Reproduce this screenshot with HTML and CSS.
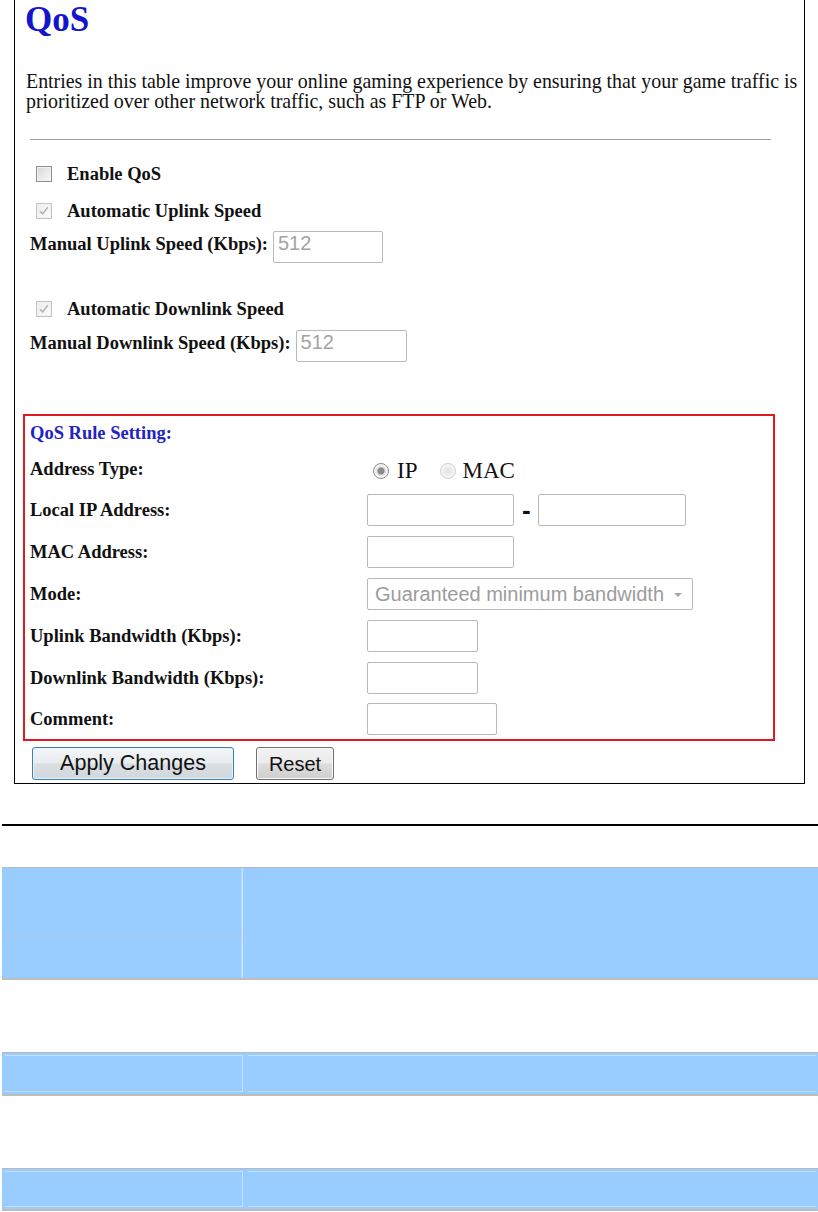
FILE: index.html
```html
<!DOCTYPE html>
<html lang="en">
<head>
<meta charset="utf-8">
<title>QoS</title>
<link rel="stylesheet" href="styles.css">
</head>
<body>
<div class="panel">
  <h1 class="title">QoS</h1>
  <p class="intro">Entries in this table improve your online gaming experience by ensuring that your game traffic is<br>prioritized over other network traffic, such as FTP or Web.</p>
  <div class="rule"></div>

  <div class="check-row r-enable"><span class="cb"></span><span class="lbl">Enable QoS</span></div>
  <div class="check-row r-auto-up"><span class="cb checked"><svg viewBox="0 0 16 16" width="16" height="16"><path d="M4 8.2 L6.6 11 L11.8 4.2" fill="none" stroke="#b0b0b0" stroke-width="1.4"/></svg></span><span class="lbl">Automatic Uplink Speed</span></div>
  <div class="field-row r-man-up"><span class="lbl">Manual Uplink Speed (Kbps):</span><input class="txt w110" value="512" disabled></div>
  <div class="check-row r-auto-down"><span class="cb checked"><svg viewBox="0 0 16 16" width="16" height="16"><path d="M4 8.2 L6.6 11 L11.8 4.2" fill="none" stroke="#b0b0b0" stroke-width="1.4"/></svg></span><span class="lbl">Automatic Downlink Speed</span></div>
  <div class="field-row r-man-down"><span class="lbl">Manual Downlink Speed (Kbps):</span><input class="txt w111" value="512" disabled></div>

  <div class="rulebox">
    <div class="rb-title">QoS Rule Setting:</div>
    <div class="rb-spacer"></div>

    <div class="lbl">Address Type:</div>
    <div class="radios">
      <span class="radio on"></span><span class="rlabel">IP</span>
      <span class="radio off"></span><span class="rlabel mac">MAC</span>
    </div>

    <div class="lbl">Local IP Address:</div>
    <div class="fields"><input class="txt w147"><span class="dash">-</span><input class="txt w148"></div>

    <div class="lbl">MAC Address:</div>
    <div class="fields"><input class="txt w147"></div>

    <div class="lbl">Mode:</div>
    <div class="fields">
      <div class="select">
        <span class="select-text">Guaranteed minimum bandwidth</span>
        <svg class="select-arrow" viewBox="0 0 10 6" width="10" height="6"><path d="M1 1 L5 5 L9 1 Z" fill="#a8a8a8"/></svg>
      </div>
    </div>

    <div class="lbl">Uplink Bandwidth (Kbps):</div>
    <div class="fields"><input class="txt w111"></div>

    <div class="lbl">Downlink Bandwidth (Kbps):</div>
    <div class="fields"><input class="txt w111"></div>

    <div class="lbl">Comment:</div>
    <div class="fields"><input class="txt w130"></div>
  </div>

  <div class="actions">
    <button class="btn btn-apply" type="button">Apply Changes</button>
    <button class="btn btn-reset" type="button">Reset</button>
  </div>
</div>

<div class="divider"></div>

<div class="band band1">
  <div class="cell c-top"></div>
  <div class="cell c-right"></div>
  <div class="cell c-bottom"></div>
</div>

<div class="band band2">
  <div class="cell c-left"></div>
  <div class="cell c-main"></div>
</div>

<div class="band band3">
  <div class="cell c-left"></div>
  <div class="cell c-main"></div>
</div>
</body>
</html>
```

FILE: styles.css
```css
* { box-sizing: border-box; }

body {
  margin: 0;
  background: #fff;
  color: #111;
  font-family: "Liberation Serif", "Times New Roman", serif;
}

.panel {
  margin-left: 14px;
  width: 791px;
  border: 1px solid #000;
  border-top: 0;
  padding: 0 0 3px 0;
}

.title {
  margin: 0 0 0 10px;
  height: 40px;
  font: bold 35px/40px "Liberation Serif", serif;
  color: #1414cc;
}

.intro {
  margin: 31px 0 0 11px;
  font-size: 19.9px;
  line-height: 20px;
  white-space: nowrap;
}

.rule {
  margin: 28px 0 0 15px;
  width: 741px;
  height: 0;
  border-top: 1px solid #a0a0a0;
}

.lbl {
  font-weight: bold;
  font-size: 18.5px;
}

.check-row {
  display: flex;
  align-items: center;
  height: 30px;
  margin-left: 21px;
}

.r-enable { margin-top: 19px; }
.r-auto-up { margin-top: 7px; }
.r-auto-down { margin-top: 31px; }

.cb {
  display: inline-block;
  width: 16px;
  height: 16px;
  margin-right: 15px;
  border: 1px solid #8e8f8f;
  background: linear-gradient(135deg, #d6d6d6, #fbfbfb);
  box-shadow: inset 0 0 0 1px #f2f2f2;
  position: relative;
}

.cb.checked {
  border-color: #c4c4c4;
  background: linear-gradient(135deg, #ececec, #fdfdfd);
}

.cb svg {
  position: absolute;
  left: -1px;
  top: -1px;
}

.field-row {
  display: flex;
  align-items: baseline;
  gap: 5px;
  margin-left: 15px;
}

.r-man-up { margin-top: 5px; }
.r-man-down { margin-top: 6px; }

.txt {
  height: 32px;
  border: 1px solid #b8b8b8;
  border-radius: 2px;
  padding: 0 4px 7px;
  font: 20px/23px "Liberation Sans", Arial, sans-serif;
  color: #a0a0a0;
  background: #fff;
}

.txt:disabled {
  background: #fff;
  color: #a4a4a4;
}

.w110 { width: 110px; }
.w111 { width: 111px; }
.w130 { width: 130px; }
.w147 { width: 147px; }
.w148 { width: 148px; }

.rulebox {
  margin: 52px 0 0 8px;
  width: 752px;
  border: 2px solid #dd1a22;
  padding-left: 5px;
  display: grid;
  grid-template-columns: 337px 1fr;
  grid-template-rows: 34px 39px repeat(5, 42px) 40px;
  align-items: center;
}

.rb-title {
  font-weight: bold;
  font-size: 18.5px;
  color: #2323c4;
}

.radios {
  display: flex;
  align-items: center;
  padding-top: 2px;
}

.radio {
  display: inline-block;
  width: 16px;
  height: 16px;
  border-radius: 50%;
}

.radio.on {
  margin-left: 6px;
  border: 1px solid #8c8c8c;
  background: radial-gradient(circle, #8a8a8a 0, #8a8a8a 3px, #dcdcdc 4px, #f6f6f6 6px);
}

.radio.off {
  margin-left: 23px;
  border: 1px solid #cfcfcf;
  background: radial-gradient(circle, #e2e2e2 0, #ececec 4px, #f7f7f7 7px);
}

.rlabel {
  font-size: 23px;
  margin-left: 8px;
}

.rlabel.mac { margin-left: 6px; }

.fields {
  display: flex;
  align-items: center;
}

.fields .txt { padding-bottom: 0; }

.dash {
  font: bold 26px/32px "Liberation Sans", Arial, sans-serif;
  margin: 0 7px 0 8px;
  color: #111;
}

.select {
  position: relative;
  width: 326px;
  height: 32px;
  border: 1px solid #b8b8b8;
  border-radius: 2px;
  display: flex;
  align-items: center;
  padding-left: 7px;
}

.select-text {
  font: 20px/23px "Liberation Sans", Arial, sans-serif;
  color: #9c9c9c;
}

.select-arrow {
  position: absolute;
  right: 9px;
  top: 13px;
}

.actions {
  display: flex;
  gap: 22px;
  margin: 6px 0 0 17px;
}

.btn {
  height: 33px;
  border-radius: 3px;
  font: 20px/1 "Liberation Sans", Arial, sans-serif;
  color: #111;
  padding: 0;
}

.btn-apply {
  width: 202px;
  font-size: 21.5px;
  border: 1px solid #3c7fb1;
  box-shadow: inset 0 0 0 1px #e6f3fb;
  background: linear-gradient(#f4f6f8 0%, #e8ecef 48%, #d9dee3 52%, #d2d8dc 100%);
}

.btn-reset {
  width: 78px;
  border: 1px solid #707070;
  background: linear-gradient(#f2f2f2 0%, #ebebeb 48%, #dddddd 52%, #cfcfcf 100%);
  box-shadow: inset 0 0 0 1px #fafafa;
}

.divider {
  margin: 40px 0 0 2px;
  width: 816px;
  height: 0;
  border-top: 2px solid #000;
}

.band {
  margin-left: 2px;
  width: 816px;
  background: #9cf;
  border-top: 1px solid #b9b9b9;
  border-bottom: 2px solid #bdbdbd;
  display: grid;
  grid-template-columns: 240px 1fr;
}

.band1 {
  margin-top: 41px;
  height: 113px;
  grid-template-rows: 68px 1fr;
}

.band1 .c-top {
  grid-column: 1;
  grid-row: 1;
  border-bottom: 1px solid #b4c6da;
  border-right: 1px solid #b8d8fb;
}

.band1 .c-bottom {
  grid-column: 1;
  grid-row: 2;
  border-right: 1px solid #b8d8fb;
}

.band1 .c-right {
  grid-column: 2;
  grid-row: 1 / span 2;
  border-left: 1px solid #c8e3ff;
}

.band2, .band3 {
  margin-top: 72px;
  padding: 2px 2px 2px 3px;
}

.band2 { height: 44px; }
.band3 { height: 43px; }

.c-left {
  border-top: 1px solid #c4e0ff;
  border-right: 1px solid #c4e0ff;
  border-bottom: 1px solid #c4e0ff;
  margin-right: 2px;
}

.c-main {
  border-top: 1px solid #c4e0ff;
  border-bottom: 1px solid #c4e0ff;
  margin-left: 3px;
}
```
